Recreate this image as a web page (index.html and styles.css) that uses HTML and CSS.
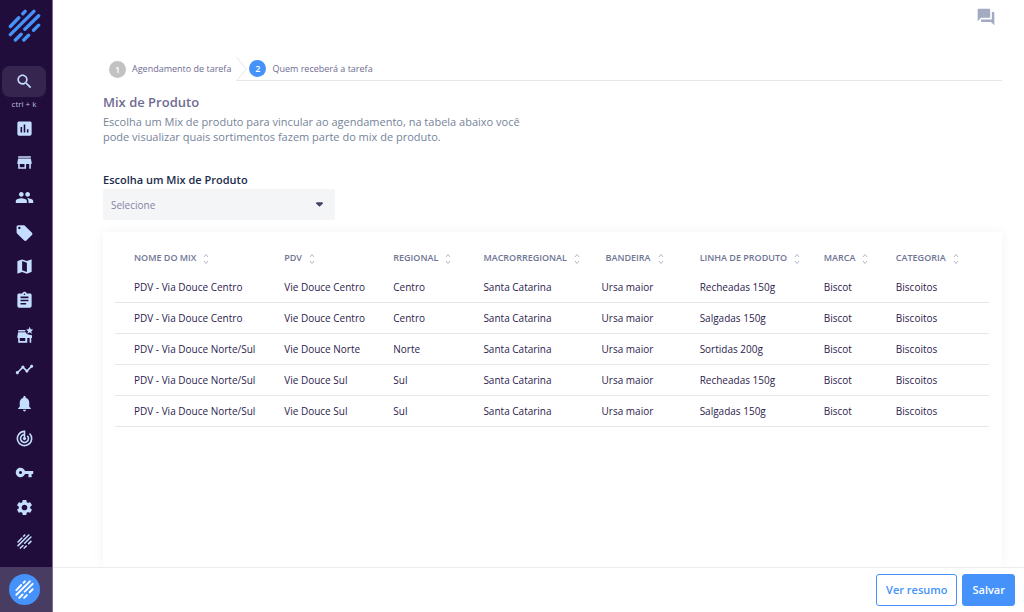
FILE: index.html
```html
<!DOCTYPE html>
<html lang="pt-BR">
<head>
<meta charset="utf-8">
<meta name="viewport" content="width=device-width, initial-scale=1">
<title>Mix de Produto</title>
<link rel="stylesheet" href="styles.css">
</head>
<body>
<svg class="defs" aria-hidden="true">
  <symbol id="brand" viewBox="24 28 98 98">
    <path d="M68 42l7-7M31 80l25-26M31 104l70-69M74 88l41-40M100 91l15-15M46 120l17-17M71 120l14-14" fill="none" stroke="currentColor" stroke-width="10" stroke-linecap="round"/>
  </symbol>
  <symbol id="sort" viewBox="0 0 6 12">
    <path d="M1 4l2-2.500 2 2.500M1 8l2 2.500 2-2.500" fill="none" stroke="currentColor"/>
  </symbol>
</svg>
<div class="app">
  <aside class="sidebar">
    <a class="logo" href="#" aria-label="Início"><svg><use href="#brand"/></svg></a>
    <button class="search" type="button" aria-label="Buscar"><svg class="icon" viewBox="0 0 24 24"><path d="M15.500 14h-.79l-.28-.27C15.410 12.590 16 11.110 16 9.500 16 5.910 13.090 3 9.500 3S3 5.910 3 9.500 5.910 16 9.500 16c1.610 0 3.090-.59 4.230-1.570l.27.28v.79l5 4.990L20.490 19l-4.990-5zm-6 0C7.010 14 5 11.990 5 9.500S7.010 5 9.500 5 14 7.010 14 9.500 11.990 14 9.500 14z"/></svg></button>
    <span class="shortcut">ctrl + k</span>
    <nav class="nav">
      <a href="#" aria-label="Relatórios"><svg class="icon" viewBox="0 0 24 24"><path d="M19 3H5c-1.100 0-2 .9-2 2v14c0 1.100.9 2 2 2h14c1.100 0 2-.9 2-2V5c0-1.100-.9-2-2-2zM9 17H7v-7h2v7zm4 0h-2V7h2v10zm4 0h-2v-4h2v4z"/></svg></a>
      <a href="#" aria-label="Lojas"><svg class="icon" viewBox="0 0 24 24"><path d="M20 4H4v2h16V4zm1 10v-2l-1-5H4l-1 5v2h1v6h10v-6h4v6h2v-6h1zm-9 4H6v-4h6v4z"/></svg></a>
      <a href="#" aria-label="Pessoas"><svg class="icon" viewBox="0 0 24 24"><path d="M16 11c1.660 0 2.990-1.340 2.990-3S17.660 5 16 5s-3 1.340-3 3 1.340 3 3 3zm-8 0c1.660 0 2.990-1.340 2.990-3S9.660 5 8 5 5 6.340 5 8s1.340 3 3 3zm0 2c-2.330 0-7 1.170-7 3.500V19h14v-2.500c0-2.330-4.670-3.500-7-3.500zm8 0c-.29 0-.62.02-.97.05 1.160.84 1.970 1.970 1.970 3.450V19h6v-2.500c0-2.330-4.670-3.500-7-3.500z"/></svg></a>
      <a href="#" aria-label="Etiquetas"><svg class="icon" viewBox="0 0 24 24"><path d="M21.410 13.580l-9-9C12.050 4.220 11.550 4 11 4H4c-1.100 0-2 .9-2 2v7c0 .55.22 1.050.59 1.420l9 9c.36.36.86.58 1.410.58s1.050-.22 1.410-.59l7-7c.37-.36.59-.86.59-1.410s-.23-1.060-.59-1.420zM5.500 9C4.670 9 4 8.330 4 7.500S4.670 6 5.500 6 7 6.670 7 7.500 6.330 9 5.500 9z"/></svg></a>
      <a href="#" aria-label="Mapa"><svg class="icon" viewBox="0 0 24 24"><path d="M20.500 3l-.16.03L15 5.100 9 3 3.360 4.900c-.21.07-.36.25-.36.48V20.500c0 .28.22.5.500.5l.16-.03L9 18.900l6 2.100 5.640-1.900c.21-.07.36-.25.36-.48V3.500c0-.28-.22-.5-.5-.5zM15 19l-6-2.110V5l6 2.110V19z"/></svg></a>
      <a href="#" aria-label="Tarefas"><svg class="icon" viewBox="0 0 24 24"><path d="M19 3h-4.180C14.400 1.840 13.300 1 12 1s-2.400.84-2.820 2H5c-1.100 0-2 .9-2 2v14c0 1.100.9 2 2 2h14c1.100 0 2-.9 2-2V5c0-1.100-.9-2-2-2zm-7 0c.55 0 1 .45 1 1s-.45 1-1 1-1-.45-1-1 .45-1 1-1zm2 14H7v-2h7v2zm3-4H7v-2h10v2zm0-4H7V7h10v2z"/></svg></a>
      <a href="#" aria-label="Loja favorita"><svg class="icon" viewBox="0 0 24 24"><path d="M4 5h9v2H4zM4 8h9.500l1.500 2 3 1 3 .5.500 1.500v2h-1v6h-2v-6h-3v6H4v-6H3v-2zM6 15v4h7v-4zM18.500 1l1.300 3 3.200.3-2.400 2.200.7 3.200-2.800-1.700-2.800 1.700.7-3.200L14 4.300l3.200-.3z"/></svg></a>
      <a href="#" aria-label="Tendências"><svg class="icon" viewBox="0 0 24 24"><path d="M23 8c0 1.100-.9 2-2 2-.18 0-.35-.02-.51-.07l-3.560 3.550c.05.16.07.34.07.52 0 1.100-.9 2-2 2s-2-.9-2-2c0-.18.02-.36.07-.52l-2.550-2.550c-.16.05-.34.07-.52.07s-.36-.02-.52-.07l-4.550 4.560c.05.16.07.33.07.51 0 1.100-.9 2-2 2s-2-.9-2-2 .9-2 2-2c.18 0 .35.02.51.07l4.560-4.550C8.020 9.360 8 9.180 8 9c0-1.100.9-2 2-2s2 .9 2 2c0 .18-.02.36-.07.52l2.550 2.550c.16-.05.34-.07.52-.07s.36.02.52.07l3.550-3.560C19.020 8.350 19 8.180 19 8c0-1.100.9-2 2-2s2 .9 2 2z"/></svg></a>
      <a href="#" aria-label="Notificações"><svg class="icon" viewBox="0 0 24 24"><path d="M12 22c1.100 0 2-.9 2-2h-4c0 1.100.9 2 2 2zm6-6v-5c0-3.070-1.630-5.640-4.500-6.320V4c0-.83-.67-1.500-1.500-1.500s-1.500.67-1.500 1.500v.68C7.640 5.360 6 7.920 6 11v5l-2 2v1h16v-1l-2-2z"/></svg></a>
      <a href="#" aria-label="Monitoramento"><svg class="icon" viewBox="0 0 24 24"><path d="M19.070 4.930l-1.410 1.410A8 8 0 1 1 11 4.070v2.020A6 6 0 1 0 16.240 7.760l-1.410 1.410A4 4 0 1 1 11 8.140v2.140A2 2 0 1 0 13 10.280V2h-1a10 10 0 1 0 7.070 2.930z"/></svg></a>
      <a href="#" aria-label="Acessos"><svg class="icon" viewBox="0 0 24 24"><path d="M12.650 10C11.830 7.670 9.610 6 7 6c-3.310 0-6 2.690-6 6s2.690 6 6 6c2.610 0 4.830-1.670 5.650-4H17v4h4v-4h2v-4H12.650zM7 14c-1.100 0-2-.9-2-2s.9-2 2-2 2 .9 2 2-.9 2-2 2z"/></svg></a>
      <a href="#" aria-label="Configurações"><svg class="icon" viewBox="0 0 24 24"><path d="M19.140 12.940c.04-.3.060-.61.060-.94 0-.32-.02-.64-.07-.94l2.030-1.580c.18-.14.23-.41.120-.61l-1.920-3.320c-.12-.22-.37-.29-.59-.22l-2.390.96c-.5-.38-1.030-.7-1.620-.94L14.400 2.810c-.04-.24-.24-.41-.48-.41h-3.840c-.24 0-.43.170-.47.410L9.250 5.350c-.59.240-1.130.570-1.620.940l-2.390-.96c-.22-.08-.47 0-.59.220L2.740 8.870c-.12.210-.08.470.120.610l2.030 1.580c-.05.300-.09.630-.09.940s.02.640.07.940l-2.030 1.580c-.18.140-.23.410-.12.610l1.920 3.320c.12.220.370.290.590.220l2.390-.96c.500.380 1.030.700 1.620.940l.36 2.540c.05.240.240.410.480.410h3.840c.240 0 .440-.170.470-.410l.36-2.540c.590-.240 1.130-.560 1.620-.940l2.390.96c.220.080.470 0 .590-.220l1.920-3.320c.120-.220.070-.470-.120-.610l-2.010-1.580zM12 15.600c-1.980 0-3.600-1.620-3.600-3.600s1.620-3.600 3.600-3.600 3.600 1.620 3.600 3.600-1.620 3.600-3.600 3.600z"/></svg></a>
      <a href="#" aria-label="Plataforma"><svg class="brand-small"><use href="#brand"/></svg></a>
    </nav>
    <div class="account"><button class="avatar" type="button" aria-label="Conta"><svg><use href="#brand"/></svg></button></div>
  </aside>
  <div class="page">
    <header class="topbar">
      <button class="chat" type="button" aria-label="Mensagens"><svg viewBox="0 0 24 24"><path d="M21 6h-2v9H6v2c0 .55.45 1 1 1h11l4 4V7c0-.55-.45-1-1-1zm-4 6V3c0-.55-.45-1-1-1H3c-.55 0-1 .45-1 1v14l4-4h10c.55 0 1-.45 1-1z"/></svg></button>
    </header>
    <main class="content">
      <ol class="steps">
        <li class="step"><span class="badge">1</span>Agendamento de tarefa</li>
        <li class="step current" aria-current="step"><svg class="divider" viewBox="0 0 11 24"><path d="M.5 0l10 12-10 12" fill="none" stroke="currentColor"/></svg><span class="badge">2</span>Quem receberá a tarefa</li>
      </ol>
      <h1 class="title">Mix de Produto</h1>
      <p class="intro">Escolha um Mix de produto para vincular ao agendamento, na tabela abaixo você pode visualizar quais sortimentos fazem parte do mix de produto.</p>
      <label class="label" for="mix">Escolha um Mix de Produto</label>
      <div class="select-box">
        <select id="mix" class="select"><option>Selecione</option></select>
        <svg class="caret" viewBox="0 0 8 5"><path d="M0 1a1 1 0 0 1 1-1h6a1 1 0 0 1 .7 1.700L4 5 .3 1.700z"/></svg>
      </div>
      <section class="card">
        <table class="table">
          <colgroup><col class="c-mix"><col class="c-pdv"><col class="c-regional"><col class="c-macro"><col class="c-bandeira"><col class="c-linha"><col class="c-marca"><col class="c-categoria"></colgroup>
          <thead><tr>
            <th>NOME DO MIX<svg><use href="#sort"/></svg></th>
            <th>PDV<svg><use href="#sort"/></svg></th>
            <th>REGIONAL<svg><use href="#sort"/></svg></th>
            <th>MACRORREGIONAL<svg><use href="#sort"/></svg></th>
            <th class="th-bandeira">BANDEIRA<svg><use href="#sort"/></svg></th>
            <th>LINHA DE PRODUTO<svg><use href="#sort"/></svg></th>
            <th>MARCA<svg><use href="#sort"/></svg></th>
            <th>CATEGORIA<svg><use href="#sort"/></svg></th>
          </tr></thead>
          <tbody>
            <tr><td>PDV - Via Douce Centro</td><td>Vie Douce Centro</td><td>Centro</td><td>Santa Catarina</td><td>Ursa maior</td><td>Recheadas 150g</td><td>Biscot</td><td>Biscoitos</td></tr>
            <tr><td>PDV - Via Douce Centro</td><td>Vie Douce Centro</td><td>Centro</td><td>Santa Catarina</td><td>Ursa maior</td><td>Salgadas 150g</td><td>Biscot</td><td>Biscoitos</td></tr>
            <tr><td>PDV - Via Douce Norte/Sul</td><td>Vie Douce Norte</td><td>Norte</td><td>Santa Catarina</td><td>Ursa maior</td><td>Sortidas 200g</td><td>Biscot</td><td>Biscoitos</td></tr>
            <tr><td>PDV - Via Douce Norte/Sul</td><td>Vie Douce Sul</td><td>Sul</td><td>Santa Catarina</td><td>Ursa maior</td><td>Recheadas 150g</td><td>Biscot</td><td>Biscoitos</td></tr>
            <tr><td>PDV - Via Douce Norte/Sul</td><td>Vie Douce Sul</td><td>Sul</td><td>Santa Catarina</td><td>Ursa maior</td><td>Salgadas 150g</td><td>Biscot</td><td>Biscoitos</td></tr>
          </tbody>
        </table>
      </section>
    </main>
    <footer class="actions">
      <button class="button outline" type="button">Ver resumo</button>
      <button class="button primary" type="button">Salvar</button>
    </footer>
  </div>
</div>
</body>
</html>
```
FILE: styles.css
```css
* { box-sizing: border-box; }
body {
  margin: 0;
  background: #fff;
  color: #2d1b4e;
  font: 11px/16px "Open Sans", "Noto Sans", sans-serif;
}
button, select { font: inherit; }
button { border: 0; padding: 0; cursor: pointer; }
svg { display: block; fill: currentColor; }
.defs { position: absolute; width: 0; height: 0; }

.app { display: flex; height: 100vh; }

.sidebar {
  display: flex;
  flex-direction: column;
  align-items: center;
  flex: none;
  width: 53px;
  padding-top: 9px;
  background: #200d3c;
  border-right: 1px solid #79708a;
  color: #c5deff;
}
.logo { color: #4593fa; margin-right: 4px; }
.logo svg { width: 33px; height: 33px; }
.search {
  display: grid;
  place-items: center;
  width: 44px;
  height: 31px;
  margin: 24px 4px 0 0;
  border-radius: 8px;
  background: #36254f;
  color: #c5deff;
}
.shortcut { margin-right: 4px; font-size: 8px; line-height: 13px; color: #b9bfdc; }
.icon { width: 19px; height: 19px; }
.nav { display: flex; flex-direction: column; flex: 1; margin: 1px 4px 8px 0; }
.nav a { display: grid; place-items: center; flex: 1; color: inherit; }
.brand-small { width: 15px; height: 15px; }
.account {
  display: grid;
  place-items: center;
  align-self: stretch;
  height: 45px;
  padding-right: 4px;
  background: #493c62;
}
.avatar {
  display: grid;
  place-items: center;
  width: 31px;
  height: 31px;
  border-radius: 50%;
  background: #4593fa;
  color: #fff;
}
.avatar svg { width: 19px; height: 19px; }

.page { display: flex; flex-direction: column; flex: 1; min-width: 0; }
.topbar { display: flex; justify-content: flex-end; padding: 7px 28px 0 0; }
.chat { background: none; color: #a3abc2; }
.chat svg { width: 20px; height: 20px; }

.content {
  display: flex;
  flex-direction: column;
  flex: 1;
  min-height: 0;
  overflow: hidden;
  padding: 30px 22px 0 50px;
}
.steps {
  display: flex;
  margin: 0;
  padding: 0 0 0 6px;
  list-style: none;
  color: #6f6c92;
  font-size: 9px;
  font-weight: 500;
}
.step { display: flex; align-items: center; height: 24px; padding-right: 5px; }
.step.current { flex: 1; border-bottom: 1px solid #e6e7ea; }
.badge {
  width: 17px;
  margin-right: 6px;
  border-radius: 50%;
  background: #c2c2c2;
  color: #fff;
  font-weight: 600;
  line-height: 17px;
  text-align: center;
}
.current .badge { background: #4593fa; }
.divider { width: 11px; height: 24px; margin-right: 2px; color: #e6e7ea; }

.title { margin: 12px 0 0; color: #6f6c92; font-size: 13px; font-weight: 600; line-height: 18px; }
.intro { max-width: 430px; margin: 3px 0 0; color: #76839a; line-height: 15px; }
.label { margin-top: 28px; color: #1c2b4b; font-weight: 600; }
.select-box { position: relative; flex: none; width: 232px; margin-top: 1px; }
.select {
  display: block;
  width: 100%;
  height: 31px;
  padding: 0 8px;
  border: 0;
  border-radius: 2px;
  background: #f4f5f7;
  color: #8583a3;
  font-size: 10px;
  appearance: none;
}
.caret { position: absolute; top: 13px; right: 12px; width: 7px; height: 5px; color: #4a3f6b; pointer-events: none; }

.card {
  flex: 1;
  margin-top: 12px;
  padding: 13px 13px 0 12px;
  box-shadow: 0 0 12px rgba(40, 30, 80, 0.05);
}
.table { width: 100%; border-collapse: collapse; table-layout: fixed; white-space: nowrap; font-size: 10px; }
.table th, .table td { padding: 0; text-align: left; }
.table th:first-child, .table td:first-child { padding-left: 19px; }
.table th { height: 26px; color: #6f7595; font-size: 9px; font-weight: 600; }
.table th svg { display: inline-block; width: 6px; height: 12px; margin-left: 7px; color: #b5b8c8; vertical-align: middle; }
.table .th-bandeira { padding-left: 4px; }
.table td { height: 31px; padding-top: 1px; border-bottom: 1px solid #e8e8ec; }
.c-mix { width: 169px; }
.c-pdv { width: 109px; }
.c-regional { width: 90px; }
.c-macro { width: 118px; }
.c-bandeira { width: 98px; }
.c-linha { width: 124px; }
.c-marca { width: 72px; }
.c-categoria { width: 93px; }

.actions {
  display: flex;
  justify-content: flex-end;
  gap: 5px;
  padding: 6px 9px 6px;
  background: #fff;
  border-top: 1px solid #ececef;
}
.button { height: 32px; padding: 0 9px; border: 1px solid #4593fa; border-radius: 3px; font-weight: 600; }
.outline { background: #fff; color: #4593fa; }
.primary { background: #4593fa; color: #fff; }
```
